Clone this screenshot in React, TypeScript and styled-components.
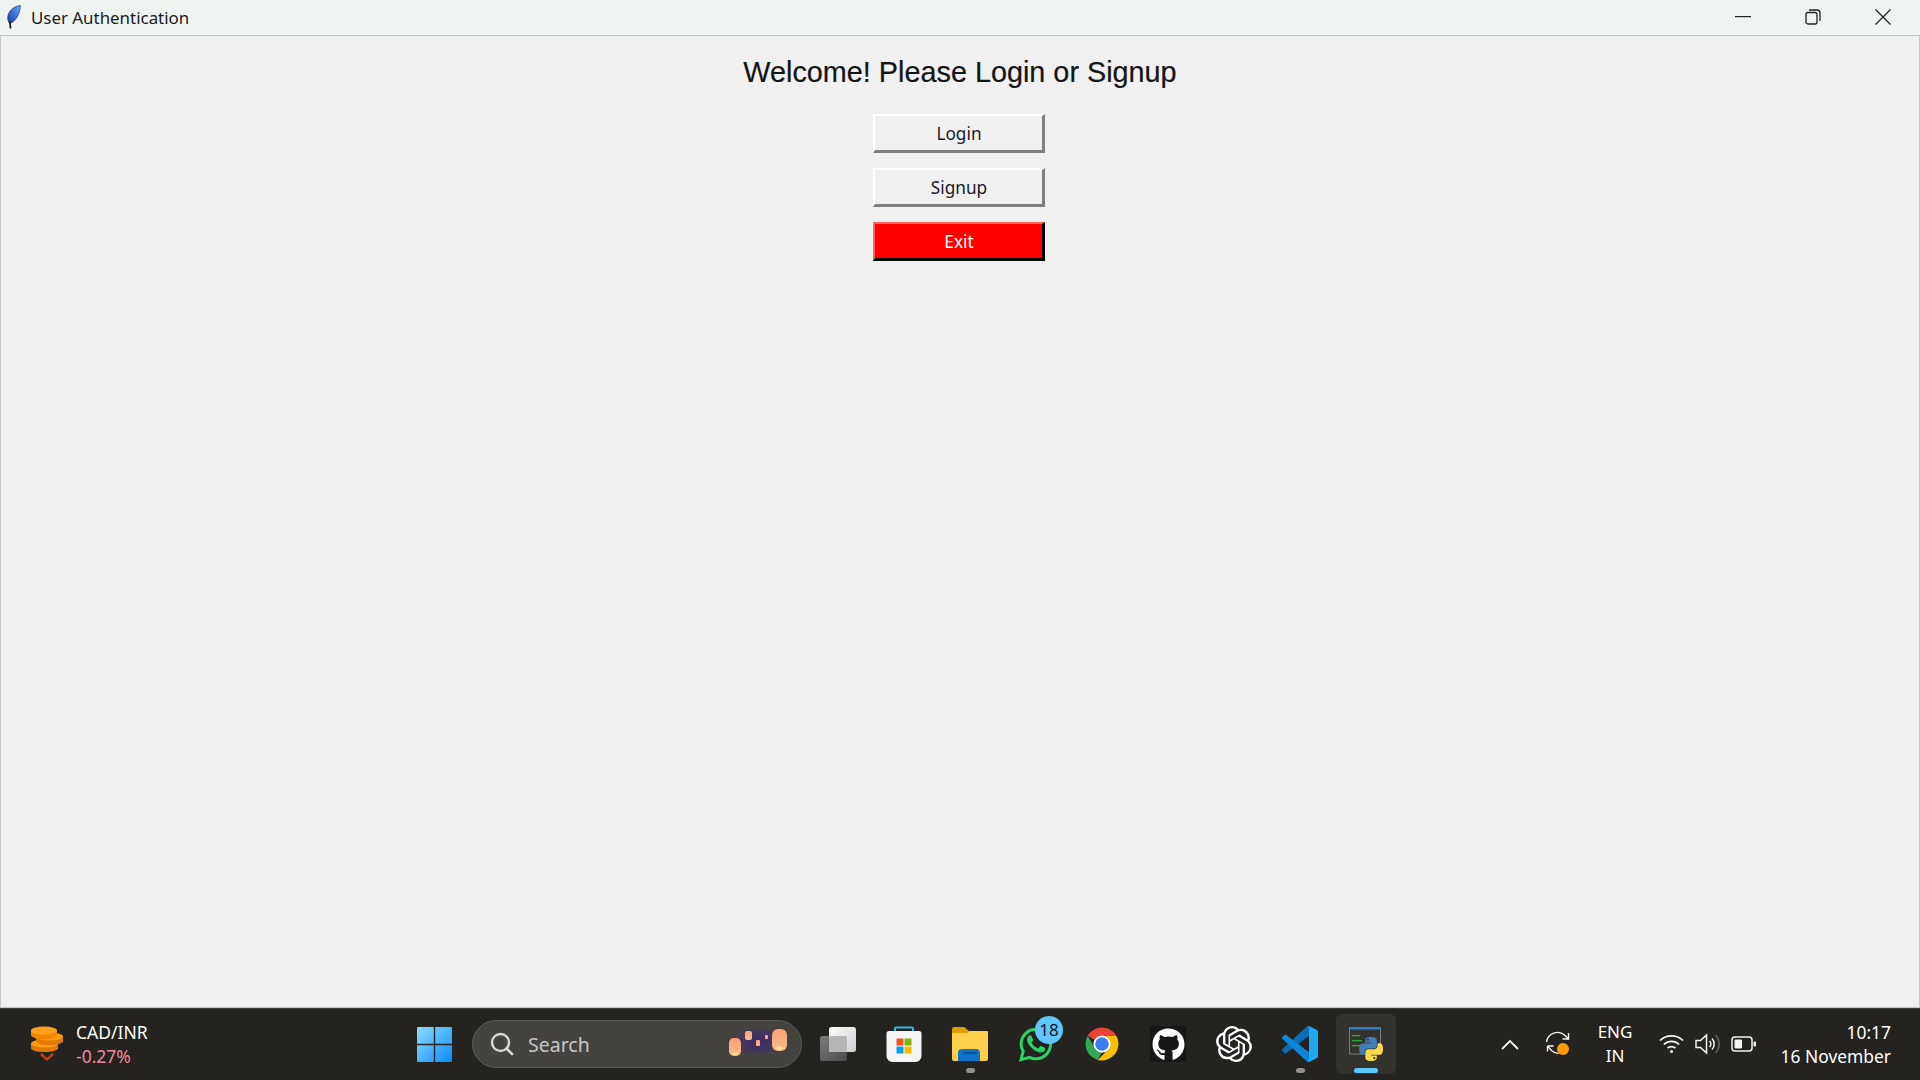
import React from "react";
import styled, { createGlobalStyle } from "styled-components";
import { FaGithub } from "react-icons/fa";
import { SiOpenai } from "react-icons/si";

const Global = createGlobalStyle`
  html, body { margin: 0; padding: 0; height: 100%; overflow: hidden; }
  #root { height: 100%; }
  * { box-sizing: border-box; }
`;

const uiFont = `"Noto Sans", "Open Sans", "Liberation Sans", sans-serif`;

const Screen = styled.div`
  width: 1920px;
  height: 1080px;
  display: flex;
  flex-direction: column;
  font-family: ${uiFont};
`;

const TitleBar = styled.header`
  height: 36px;
  flex: none;
  display: flex;
  align-items: center;
  background: #eff4f1;
  border-bottom: 1px solid #c4c6c5;
  padding-left: 7px;
  padding-bottom: 1px;
`;

const TitleText = styled.span`
  margin-left: 10px;
  font-size: 16.9px;
  color: #1b1b1b;
`;

const WindowControls = styled.div`
  margin-left: auto;
  margin-right: 2px;
  display: flex;
  height: 100%;
`;

const WindowControl = styled.button`
  width: 70px;
  height: 100%;
  padding: 0;
  border: none;
  background: transparent;
  display: flex;
  align-items: center;
  justify-content: center;
  svg { display: block; }
`;

const WindowBody = styled.main`
  flex: 1;
  display: flex;
  flex-direction: column;
  align-items: center;
  background: #f0f0f0;
  border: 1px solid #c9c9c9;
  border-top: none;
  padding-top: 18px;
`;

const Heading = styled.h1`
  margin: 0 0 23px;
  font: 400 28.8px/37px "Liberation Sans", Arial, sans-serif;
  color: #151515;
  -webkit-text-stroke: 0.2px #151515;
`;

const ActionButton = styled.button<{ $danger?: boolean }>`
  width: 172px;
  height: 39px;
  margin: 0 2px 15px 0;
  padding: 0 0 0 1px;
  font: 400 17.2px ${uiFont};
  color: ${(p) => (p.$danger ? "#fff" : "#1a1a2a")};
  background: ${(p) => (p.$danger ? "#ff0000" : "#f0f0f0")};
  border-style: solid;
  border-width: 2px 3px 3px 2px;
  border-color: ${(p) =>
    p.$danger
      ? "#ff6060 #000 #000 #ff6060"
      : "#ffffff #808080 #808080 #ffffff"};
`;

const Taskbar = styled.footer`
  height: 72px;
  flex: none;
  display: flex;
  align-items: center;
  background: #24231f;
  border-top: 1px solid #3a3937;
  padding-bottom: 1px;
  color: #fff;
`;

const Widget = styled.div`
  width: 401px;
  flex: none;
  display: flex;
  align-items: center;
  gap: 12px;
  padding-left: 30px;
`;

const WidgetText = styled.div`
  display: flex;
  flex-direction: column;
  font-size: 17.5px;
  line-height: 24px;
`;

const WidgetDelta = styled.span`
  color: #f0899e;
`;

const Slot = styled.div<{ $active?: boolean }>`
  position: relative;
  width: ${(p) => (p.$active ? "60px" : "66px")};
  height: 60px;
  margin: 0 ${(p) => (p.$active ? "3px" : "0")};
  flex: none;
  display: flex;
  align-items: center;
  justify-content: center;
  border-radius: 6px;
  background: ${(p) => (p.$active ? "#32322f" : "transparent")};
  svg { display: block; }
`;

const RunDot = styled.span`
  position: absolute;
  left: 50%;
  bottom: 1px;
  width: 9px;
  height: 5px;
  margin-left: -4px;
  border-radius: 3px;
  background: #8f8f8c;
`;

const ActiveBar = styled.span`
  position: absolute;
  left: 18px;
  bottom: 1px;
  width: 24px;
  height: 5px;
  border-radius: 3px;
  background: #5cc8f8;
`;

const Badge = styled.span`
  position: absolute;
  left: 32px;
  top: 2px;
  width: 28px;
  height: 28px;
  border-radius: 50%;
  background: #60c5fb;
  color: #10161c;
  font-size: 17px;
  line-height: 28px;
  text-align: center;
`;

const SearchBox = styled.div`
  width: 330px;
  height: 48px;
  flex: none;
  margin: 0 3px 0 5px;
  display: flex;
  align-items: center;
  padding: 0 14px 0 17px;
  border-radius: 24px;
  background: #454340;
  border: 1px solid #5c5a58;
`;

const SearchLabel = styled.span`
  margin-left: 14px;
  font-size: 19.5px;
  color: #c8c8c6;
`;

const SearchArt = styled.span`
  margin-left: auto;
  display: flex;
`;

const Tray = styled.div`
  margin-left: auto;
  margin-right: 29px;
  width: 397px;
  display: flex;
  align-items: center;
`;

const TraySlot = styled.div<{ $w: number; $ml?: number }>`
  width: ${(p) => p.$w}px;
  margin-left: ${(p) => p.$ml ?? 0}px;
  flex: none;
  display: flex;
  justify-content: center;
  align-items: center;
  svg { display: block; }
`;

const Lang = styled.div`
  width: 50px;
  margin-left: 16px;
  flex: none;
  text-align: center;
  font-size: 17px;
  line-height: 24px;
`;

const Clock = styled.div`
  margin-left: auto;
  text-align: right;
  font-size: 17.4px;
  line-height: 24px;
`;

const GithubTile = styled.span`
  width: 36px;
  height: 36px;
  display: flex;
  align-items: center;
  justify-content: center;
  background: #181618;
  color: #fff;
`;

const Feather = () => (
  <svg width="14" height="24" viewBox="0 0 14 24">
    <defs>
      <linearGradient id="fth" x1="0" y1="1" x2="1" y2="0">
        <stop offset="0" stopColor="#1a3c86" />
        <stop offset="0.6" stopColor="#3f7fe4" />
        <stop offset="1" stopColor="#6aa8f2" />
      </linearGradient>
    </defs>
    <path d="M13.500 .5C7.500 .8 1.500 5.500 .8 11.500c-.3 2.500.2 5 1.700 7C8.500 17.500 13 9 13.500 .5z" fill="url(#fth)" stroke="#1b2c55" strokeWidth="0.600" />
    <path d="M2.800 16.500L3.600 23.500" stroke="#20222a" strokeWidth="1.800" />
  </svg>
);

const Coins = () => (
  <svg width="34" height="36" viewBox="0 0 34 36">
    <path d="M12 27l5 5 5-5 2 2-7 6-7-6z" fill="#c63f10" />
    <g>
      <path d="M1 17h27v5c0 2.500-6 4-13.500 4S1 24.500 1 22z" fill="#e07a05" />
      <ellipse cx="14.500" cy="17.500" rx="13.500" ry="4" fill="#ff9c10" />
      <path d="M6 10h27v5c0 2.500-6 4-13.500 4S6 17.500 6 15z" fill="#e07a05" />
      <ellipse cx="19.500" cy="10.500" rx="13.500" ry="4" fill="#ff9c10" />
      <path d="M1 4h26v5c0 2.500-6 4-13 4S1 11.500 1 9z" fill="#ef8605" />
      <ellipse cx="14" cy="4.500" rx="13" ry="4" fill="#ffa01a" />
    </g>
  </svg>
);

const WindowsLogo = () => (
  <svg width="35" height="35" viewBox="0 0 35 35">
    <defs>
      <linearGradient id="win" x1="0" y1="0" x2="1" y2="1">
        <stop offset="0" stopColor="#8fdcff" />
        <stop offset="1" stopColor="#0a8dfa" />
      </linearGradient>
    </defs>
    <path
      d="M1 0h15.800v16.800H0V1a1 1 0 0 1 1-1zM18.200 0H34a1 1 0 0 1 1 1v15.800H18.200zM0 18.200h16.800V35H1a1 1 0 0 1-1-1zM18.200 18.200H35V34a1 1 0 0 1-1 1H18.200z"
      fill="url(#win)"
    />
  </svg>
);

const Magnifier = () => (
  <svg width="24" height="24" viewBox="0 0 24 24" fill="none">
    <circle cx="10.500" cy="10.500" r="8.500" stroke="#d8d8d6" strokeWidth="2.400" />
    <path d="M16.500 16.500L22 22" stroke="#d8d8d6" strokeWidth="2.600" strokeLinecap="round" />
  </svg>
);

const Lantern = ({ x, y, w, h }: { x: number; y: number; w: number; h: number }) => (
  <g>
    <rect x={x} y={y} width={w} height={h} rx={w * 0.4} fill="url(#lan)" />
    <ellipse cx={x + w / 2} cy={y + h - w * 0.2} rx={w * 0.26} ry={w * 0.12} fill="#ffe29a" />
  </g>
);

const Lanterns = () => (
  <svg width="60" height="30" viewBox="0 0 60 30">
    <defs>
      <radialGradient id="sky">
        <stop offset="0.300" stopColor="#3f2f66" />
        <stop offset="0.750" stopColor="#433a55" />
        <stop offset="1" stopColor="#454340" stopOpacity="0" />
      </radialGradient>
      <linearGradient id="lan" x1="0" y1="0" x2="0" y2="1">
        <stop offset="0" stopColor="#ff9f78" />
        <stop offset="1" stopColor="#f9bb85" />
      </linearGradient>
    </defs>
    <ellipse cx="31" cy="12" rx="27" ry="16" fill="url(#sky)" />
    <Lantern x={2} y={9} w={12} h={18} />
    <rect x="18" y="2" width="7" height="9" rx="2" fill="url(#lan)" />
    <rect x="29" y="11" width="4" height="6" rx="1" fill="url(#lan)" />
    <rect x="38" y="6" width="3" height="4" rx="1" fill="url(#lan)" />
    <Lantern x={45} y={0} w={15} h={22} />
  </svg>
);

const TaskView = () => (
  <svg width="36" height="34" viewBox="0 0 36 34">
    <defs>
      <linearGradient id="tvb" x1="0" y1="0" x2="1" y2="1">
        <stop offset="0" stopColor="#7b7b7b" />
        <stop offset="1" stopColor="#4a4a4a" />
      </linearGradient>
      <linearGradient id="tvf" x1="0" y1="0" x2="1" y2="1">
        <stop offset="0" stopColor="#fbfbfb" />
        <stop offset="1" stopColor="#cfcfcf" />
      </linearGradient>
    </defs>
    <rect x="0" y="9" width="27" height="25" rx="2.500" fill="url(#tvb)" />
    <rect x="9" y="0" width="27" height="25" rx="2.500" fill="url(#tvf)" />
    <rect x="9" y="9" width="18" height="16" rx="1.500" fill="#b5b5b5" />
  </svg>
);

const Store = () => (
  <svg width="36" height="36" viewBox="0 0 36 36">
    <path d="M9 8V2.500A1 1 0 0 1 10 1.500h16a1 1 0 0 1 1 1V8" fill="none" stroke="#35b6ea" strokeWidth="2" />
    <path d="M3 5h30a2.500 2.500 0 0 1 2.500 2.500V30a6 6 0 0 1-6 6h-23a6 6 0 0 1-6-6V7.500A2.500 2.500 0 0 1 3 5z" fill="#f4f4f4" />
    <rect x="10.500" y="12.500" width="7" height="7" fill="#f25022" />
    <rect x="18.500" y="12.500" width="7" height="7" fill="#7fba00" />
    <rect x="10.500" y="20.500" width="7" height="7" fill="#00a4ef" />
    <rect x="18.500" y="20.500" width="7" height="7" fill="#ffb900" />
  </svg>
);

const Folder = () => (
  <svg width="36" height="34" viewBox="0 0 36 34">
    <path d="M0 2a2 2 0 0 1 2-2h10l5 4h19v6H0z" fill="#d9a000" />
    <path d="M0 6h15l3-2h16a2 2 0 0 1 2 2v26a2 2 0 0 1-2 2H2a2 2 0 0 1-2-2z" fill="#ffd04a" />
    <path d="M6 34v-8a4 4 0 0 1 4-4h14a4 4 0 0 1 4 4v8z" fill="#0f74c9" />
    <rect x="11" y="25" width="14" height="1.800" fill="#0b4f8e" />
  </svg>
);

const WhatsApp = () => (
  <svg width="36" height="36" viewBox="0 0 24 24">
    <path
      d="M17.470 14.380c-.300-.150-1.760-.870-2.030-.970-.270-.100-.470-.150-.670.150-.200.300-.770.970-.940 1.170-.170.200-.350.220-.650.070-.300-.150-1.260-.460-2.390-1.480-.880-.790-1.480-1.760-1.650-2.060-.170-.300-.020-.460.130-.610.130-.130.300-.350.450-.520.150-.170.200-.300.300-.500.100-.200.050-.370-.020-.520-.070-.150-.670-1.620-.920-2.210-.240-.580-.490-.500-.670-.510h-.570c-.200 0-.520.070-.790.370-.270.300-1.040 1.020-1.040 2.480s1.060 2.880 1.210 3.070c.150.200 2.100 3.200 5.080 4.480.710.310 1.260.490 1.690.630.710.230 1.360.190 1.870.120.570-.080 1.760-.720 2.010-1.420.250-.700.250-1.290.170-1.420-.070-.120-.270-.200-.570-.350z"
      fill="#25d366"
    />
    <path
      d="M12 2.100a9.850 9.850 0 0 0-8.530 14.780L2 22.400l5.650-1.480A9.880 9.880 0 1 0 12 2.100z"
      fill="none"
      stroke="#25d366"
      strokeWidth="2"
    />
  </svg>
);

const Chrome = () => (
  <svg width="36" height="36" viewBox="0 0 48 48">
    <path d="M5 13A22 22 0 0 1 43.050 13H24A11 11 0 0 0 14.500 18.500z" fill="#ea4335" />
    <path d="M5 13L14.500 29.500A11 11 0 0 0 24 35L18.300 45.200A22 22 0 0 1 5 13z" fill="#34a853" />
    <path d="M43.050 13A22 22 0 0 1 18.300 45.200L33.500 29.500A11 11 0 0 0 24 13z" fill="#fbbc04" />
    <circle cx="24" cy="24" r="11.500" fill="#fff" />
    <circle cx="24" cy="24" r="9" fill="#3b7cf0" />
  </svg>
);

const VSCode = () => (
  <svg width="36" height="36" viewBox="0 0 100 100">
    <path
      d="M96.4614 10.7962L75.8569 0.875542C73.4719 -0.272773 70.6217 0.211611 68.75 2.08333L1.29858 63.5832C-0.515693 65.2373 -0.513607 68.0937 1.30308 69.7452L6.81272 74.754C8.29793 76.1042 10.5347 76.2036 12.1338 74.9905L93.3609 13.3699C96.086 11.3026 100 13.2462 100 16.6667V16.4275C100 14.0265 98.6246 11.8378 96.4614 10.7962Z"
      fill="#0a6fba"
    />
    <path
      d="M96.4614 89.2038L75.8569 99.1245C73.4719 100.273 70.6217 99.7884 68.75 97.9167L1.29858 36.4169C-0.515693 34.7627 -0.513607 31.9063 1.30308 30.2548L6.81272 25.246C8.29793 23.8958 10.5347 23.7964 12.1338 25.0095L93.3609 86.6301C96.086 88.6974 100 86.7538 100 83.3334V83.5726C100 85.9735 98.6246 88.1622 96.4614 89.2038Z"
      fill="#0d86d8"
    />
    <path
      d="M75.8578 99.1263C73.4721 100.274 70.6219 99.7885 68.75 97.9166C71.0564 100.223 75 98.5895 75 95.3278V4.67213C75 1.41039 71.0564 -0.223106 68.75 2.08329C70.6219 0.211402 73.4721 -0.273666 75.8578 0.873633L96.4587 10.7807C98.6234 11.8217 100 14.0112 100 16.4132V83.5871C100 85.9891 98.6234 88.1786 96.4586 89.2196L75.8578 99.1263Z"
      fill="#22a7f2"
    />
  </svg>
);

const PythonApp = () => (
  <svg width="34" height="34" viewBox="0 0 34 34">
    <rect x="0.500" y="0.500" width="31" height="26.500" fill="#33332f" stroke="#7a7a7a" />
    <rect x="0" y="0" width="32" height="2.500" fill="#2f7fc4" />
    <rect x="3" y="8" width="8" height="1.300" fill="#2fa43a" />
    <rect x="3" y="13" width="10" height="1.300" fill="#2fa43a" />
    <rect x="3" y="18" width="12" height="1.300" fill="#2fa43a" />
    <svg x="10" y="10" width="24" height="24" viewBox="0 0 110 112">
      <path
        d="M54.919 0.001c-4.584.022-8.961.413-12.813 1.095C30.760 3.099 28.700 7.295 28.700 15.032v10.219h26.813v3.406H18.637c-7.792 0-14.616 4.684-16.750 13.594-2.462 10.213-2.571 16.586 0 27.250 1.906 7.938 6.458 13.594 14.250 13.594h9.219v-12.250c0-8.850 7.657-16.656 16.750-16.656h26.781c7.455 0 13.406-6.138 13.406-13.625V15.032c0-7.266-6.130-12.725-13.406-13.937C64.282.328 59.502-.020 54.919.001zM40.419 8.220c2.770 0 5.031 2.299 5.031 5.125 0 2.816-2.262 5.094-5.031 5.094-2.779 0-5.031-2.277-5.031-5.094 0-2.826 2.252-5.125 5.031-5.125z"
        fill="#3f7fb5"
      />
      <path
        d="M85.638 28.657v11.906c0 9.231-7.826 17-16.750 17H42.106c-7.336 0-13.406 6.278-13.406 13.625v25.531c0 7.266 6.319 11.540 13.406 13.625 8.487 2.496 16.626 2.947 26.781 0 6.750-1.954 13.406-5.888 13.406-13.625V86.501H55.513v-3.406h40.187c7.792 0 10.696-5.435 13.406-13.594 2.799-8.399 2.680-16.476 0-27.250-1.926-7.757-5.604-13.594-13.406-13.594zM70.575 93.407c2.779 0 5.031 2.277 5.031 5.094 0 2.826-2.252 5.125-5.031 5.125-2.770 0-5.031-2.299-5.031-5.125 0-2.816 2.262-5.094 5.031-5.094z"
        fill="#ffd84a"
      />
    </svg>
  </svg>
);

const SyncIcon = () => (
  <svg width="26" height="26" viewBox="0 0 26 26" fill="none">
    <path d="M1.500 11A11 11 0 0 1 20 4.500L23.500 8M23.500 2v6h-6" stroke="#f2f2f2" strokeWidth="1.400" />
    <path d="M2.500 15h6M2.500 15v5.500M2.500 15l4 4.500a11 11 0 0 0 7 3" stroke="#f2f2f2" strokeWidth="1.400" />
    <circle cx="18" cy="18" r="6" fill="#ff9a0a" />
  </svg>
);

const Wifi = () => (
  <svg width="25" height="20" viewBox="0 0 25 20" fill="none" stroke="#f4f4f4" strokeWidth="1.700">
    <path d="M1 6.500a16.500 16.500 0 0 1 23 0" />
    <path d="M4.800 10.500a11 11 0 0 1 15.400 0" />
    <path d="M8.500 14.200a5.700 5.700 0 0 1 8 0" />
    <circle cx="12.500" cy="17.500" r="1.500" fill="#f4f4f4" stroke="none" />
  </svg>
);

const Volume = () => (
  <svg width="25" height="22" viewBox="0 0 25 22" fill="none" stroke="#f4f4f4" strokeWidth="1.500">
    <path d="M1 7.500h4.500L11.500 2v18l-6-5.500H1z" />
    <path d="M14.500 8a4 4 0 0 1 0 6" />
    <path d="M17 5.500a8 8 0 0 1 0 11" />
    <path d="M20.500 2a13 13 0 0 1 0 18" stroke="#6a6a68" />
  </svg>
);

const Battery = () => (
  <svg width="25" height="16" viewBox="0 0 25 16" fill="none">
    <rect x="1" y="1" width="20" height="14" rx="3" stroke="#f4f4f4" strokeWidth="1.500" />
    <rect x="3.500" y="3.500" width="7.500" height="9" rx="1" fill="#f4f4f4" />
    <rect x="22.500" y="5.500" width="2.500" height="5" rx="1" fill="#f4f4f4" />
  </svg>
);

export default function App() {
  return (
    <Screen>
      <Global />
      <TitleBar>
        <Feather />
        <TitleText>User Authentication</TitleText>
        <WindowControls>
          <WindowControl aria-label="Minimise">
            <svg width="16" height="2" viewBox="0 0 16 2">
              <rect width="16" height="1.200" fill="#222" />
            </svg>
          </WindowControl>
          <WindowControl aria-label="Restore">
            <svg width="16" height="16" viewBox="0 0 16 16" fill="none" stroke="#222" strokeWidth="1.300">
              <rect x="1" y="3.500" width="11" height="11.500" rx="2" />
              <path d="M4 1h8a3 3 0 0 1 3 3v8" />
            </svg>
          </WindowControl>
          <WindowControl aria-label="Close">
            <svg width="16" height="16" viewBox="0 0 16 16" stroke="#222" strokeWidth="1.300">
              <path d="M.5.500l15 15M15.500.500l-15 15" />
            </svg>
          </WindowControl>
        </WindowControls>
      </TitleBar>
      <WindowBody>
        <Heading>Welcome! Please Login or Signup</Heading>
        <ActionButton>Login</ActionButton>
        <ActionButton>Signup</ActionButton>
        <ActionButton $danger>Exit</ActionButton>
      </WindowBody>
      <Taskbar>
        <Widget>
          <Coins />
          <WidgetText>
            <span>CAD/INR</span>
            <WidgetDelta>-0.27%</WidgetDelta>
          </WidgetText>
        </Widget>
        <Slot>
          <WindowsLogo />
        </Slot>
        <SearchBox>
          <Magnifier />
          <SearchLabel>Search</SearchLabel>
          <SearchArt>
            <Lanterns />
          </SearchArt>
        </SearchBox>
        <Slot>
          <TaskView />
        </Slot>
        <Slot>
          <Store />
        </Slot>
        <Slot>
          <Folder />
          <RunDot />
        </Slot>
        <Slot>
          <WhatsApp />
          <Badge>18</Badge>
        </Slot>
        <Slot>
          <Chrome />
        </Slot>
        <Slot>
          <GithubTile>
            <FaGithub size={33} />
          </GithubTile>
        </Slot>
        <Slot>
          <SiOpenai size={36} color="#fff" />
        </Slot>
        <Slot>
          <VSCode />
          <RunDot />
        </Slot>
        <Slot $active>
          <PythonApp />
          <ActiveBar />
        </Slot>
        <Tray>
          <TraySlot $w={32}>
            <svg width="18" height="11" viewBox="0 0 18 11" fill="none" stroke="#f4f4f4" strokeWidth="1.800">
              <path d="M1 10l8-8 8 8" />
            </svg>
          </TraySlot>
          <TraySlot $w={32} $ml={16}>
            <SyncIcon />
          </TraySlot>
          <Lang>
            ENG
            <br />
            IN
          </Lang>
          <TraySlot $w={34} $ml={14}>
            <Wifi />
          </TraySlot>
          <TraySlot $w={34} $ml={2}>
            <Volume />
          </TraySlot>
          <TraySlot $w={34} $ml={2}>
            <Battery />
          </TraySlot>
          <Clock>
            10:17
            <br />
            16 November
          </Clock>
        </Tray>
      </Taskbar>
    </Screen>
  );
}
